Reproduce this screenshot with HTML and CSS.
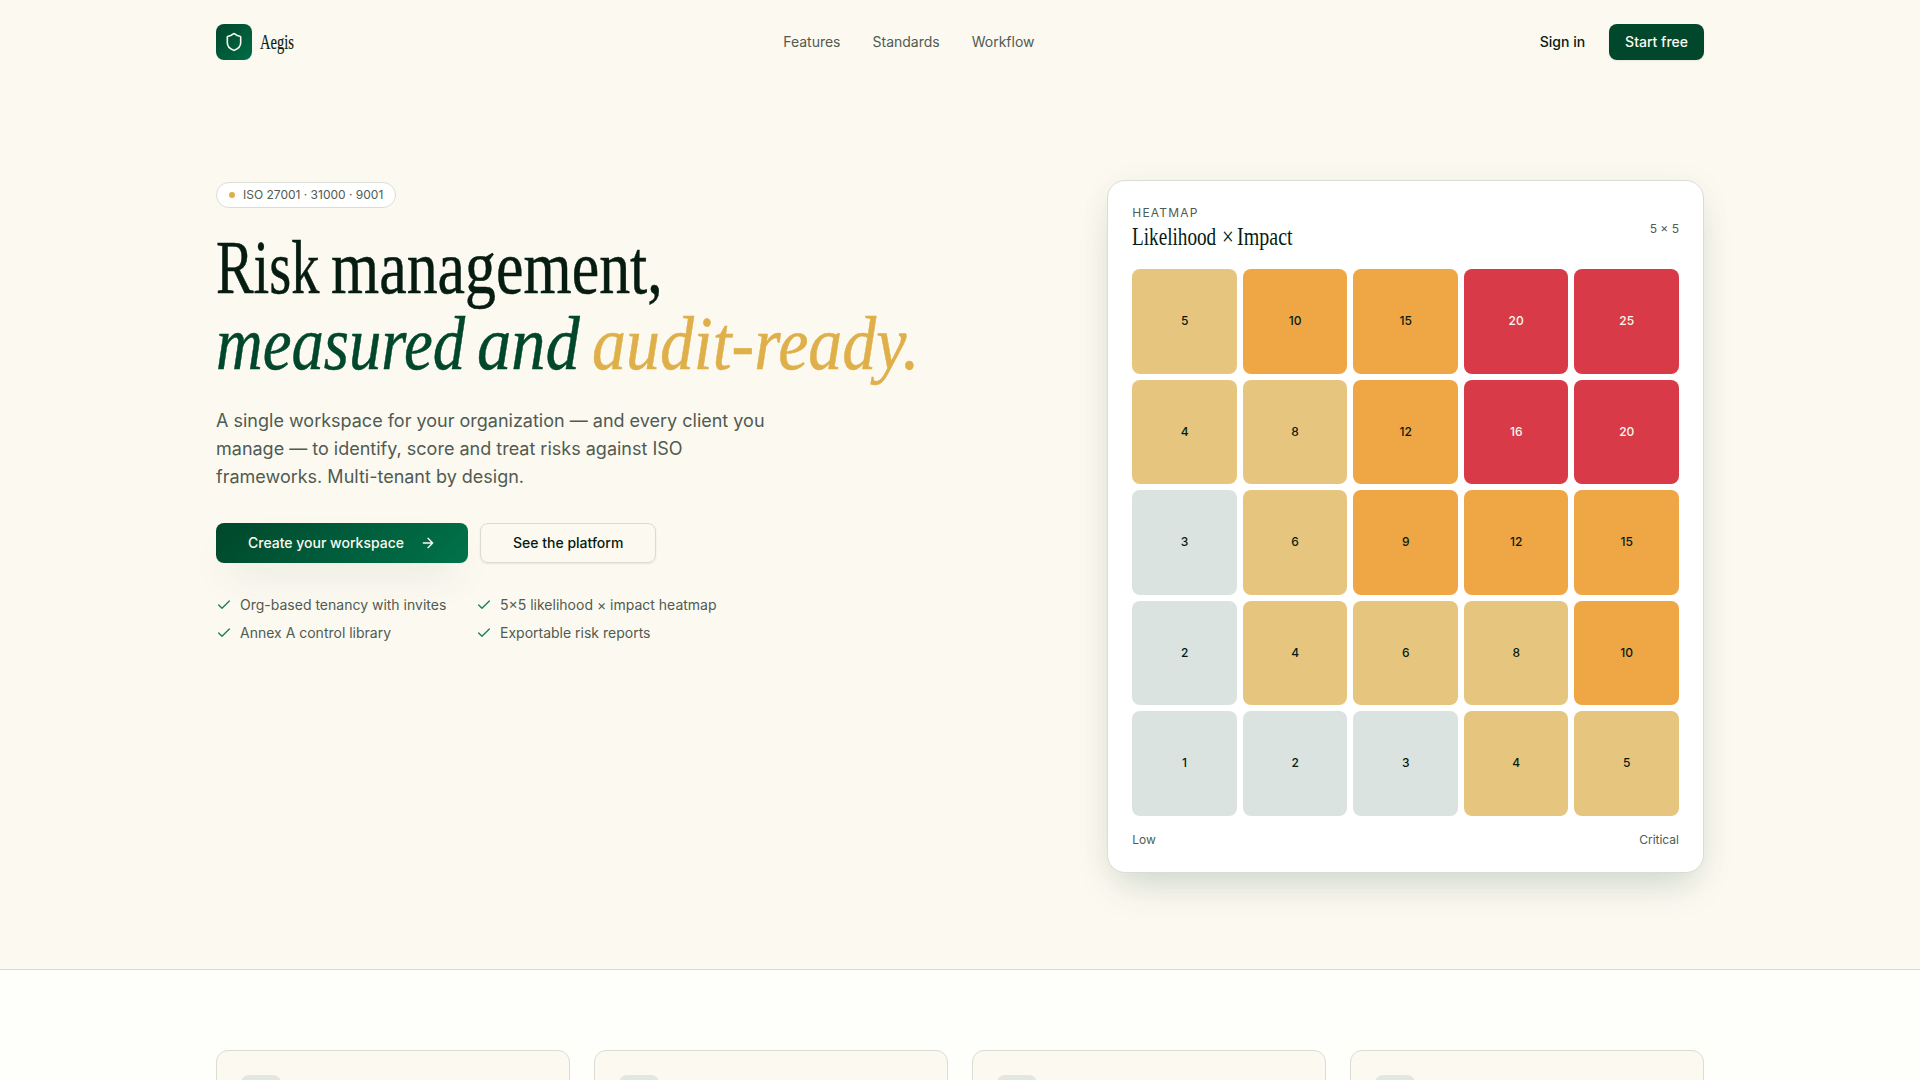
FILE: index.html
```html
<!DOCTYPE html>
<html lang="en">
<head>
<meta charset="utf-8">
<title>Aegis</title>
<link rel="stylesheet" href="styles.css">
</head>
<body>
<header class="container header">
  <div class="brand">
    <span class="brand-mark"><svg width="20" height="20" viewBox="0 0 24 24"><path d="M20 13c0 5-3.5 7.5-7.66 8.95a1 1 0 0 1-.67-.01C7.5 20.5 4 18 4 13V6a1 1 0 0 1 1-1c2 0 4.500-1.200 6.240-2.720a1.170 1.170 0 0 1 1.520 0C14.510 3.810 17 5 19 5a1 1 0 0 1 1 1z"/></svg></span>
    <span class="brand-name serif">Aegis</span>
  </div>
  <nav class="nav"><a>Features</a><a>Standards</a><a>Workflow</a></nav>
  <div class="actions"><a class="btn ghost">Sign in</a><a class="btn solid">Start free</a></div>
</header>

<main class="container hero">
  <div class="copy">
    <div class="badge"><span class="dot"></span>ISO 27001 · 31000 · 9001</div>
    <h1 class="serif">
      <span class="line"><span class="word w-risk">Risk</span> <span class="word w-management">management,</span></span>
      <em class="line"><span class="word w-measured">measured</span> <span class="word w-and">and</span> <span class="word w-ready">audit-ready.</span></em>
    </h1>
    <p class="lead">A single workspace for your organization — and every client you manage — to identify, score and treat risks against ISO frameworks. Multi-tenant by design.</p>
    <div class="cta">
      <a class="btn primary">Create your workspace<svg width="16" height="16" viewBox="0 0 24 24"><path d="M5 12h14M12 5l7 7-7 7"/></svg></a>
      <a class="btn outline">See the platform</a>
    </div>
    <ul class="checks">
      <li><svg width="16" height="16" viewBox="0 0 24 24"><path d="M20 6 9 17l-5-5"/></svg>Org-based tenancy with invites</li>
      <li><svg width="16" height="16" viewBox="0 0 24 24"><path d="M20 6 9 17l-5-5"/></svg>5×5 likelihood × impact heatmap</li>
      <li><svg width="16" height="16" viewBox="0 0 24 24"><path d="M20 6 9 17l-5-5"/></svg>Annex A control library</li>
      <li><svg width="16" height="16" viewBox="0 0 24 24"><path d="M20 6 9 17l-5-5"/></svg>Exportable risk reports</li>
    </ul>
  </div>

  <section class="card">
    <div class="card-head">
      <div>
        <div class="eyebrow">HEATMAP</div>
        <h2 class="serif"><span class="word w-likelihood">Likelihood</span> <span class="word w-times">×</span> <span class="word w-impact">Impact</span></h2>
      </div>
      <span>5 × 5</span>
    </div>
    <div class="heatmap">
      <span class="cell mid">5</span><span class="cell high">10</span><span class="cell high">15</span><span class="cell crit">20</span><span class="cell crit">25</span>
      <span class="cell mid">4</span><span class="cell mid">8</span><span class="cell high">12</span><span class="cell crit">16</span><span class="cell crit">20</span>
      <span class="cell low">3</span><span class="cell mid">6</span><span class="cell high">9</span><span class="cell high">12</span><span class="cell high">15</span>
      <span class="cell low">2</span><span class="cell mid">4</span><span class="cell mid">6</span><span class="cell mid">8</span><span class="cell high">10</span>
      <span class="cell low">1</span><span class="cell low">2</span><span class="cell low">3</span><span class="cell mid">4</span><span class="cell mid">5</span>
    </div>
    <div class="legend"><span>Low</span><span>Critical</span></div>
  </section>
</main>

<section class="features">
  <div class="container feature-grid">
    <article class="feature"><span class="feature-icon"></span></article>
    <article class="feature"><span class="feature-icon"></span></article>
    <article class="feature"><span class="feature-icon"></span></article>
    <article class="feature"><span class="feature-icon"></span></article>
  </div>
</section>
</body>
</html>
```
FILE: styles.css
```css
* { box-sizing: border-box; margin: 0; padding: 0; }
body {
  display: flex; flex-direction: column;
  height: 100vh;
  overflow: hidden;
  background: #fcf9f1;
  color: #061c11;
  font: 14px/20px Inter, sans-serif;
}
svg { fill: none; stroke: currentColor; stroke-width: 2; stroke-linecap: round; stroke-linejoin: round; flex: none; }
.serif { font-family: "Liberation Serif", serif; font-weight: 400; }
.container { width: 1536px; margin: 0 auto; padding: 0 24px; }

.header { display: flex; align-items: center; justify-content: space-between; flex: none; height: 84px; }
.brand { display: flex; align-items: center; gap: 8px; width: 78px; }
.brand-mark {
  display: grid; place-items: center; flex: none;
  width: 36px; height: 36px; border-radius: 8px;
  background: linear-gradient(135deg, #00472b, #006c47);
  color: #fcf9f1;
}
.brand-mark svg { stroke-width: 1.9; }
.brand-name {
  font-size: 21px; line-height: 28px;
  transform: scaleX(.69); transform-origin: left;
  -webkit-text-stroke: .2px;
}
.nav { display: flex; gap: 32px; color: #505b52; }
.actions { display: flex; gap: 8px; }
.btn {
  display: inline-flex; align-items: center; justify-content: center;
  height: 36px; padding: 0 16px; border-radius: 8px;
  font-weight: 500; white-space: nowrap;
}
.solid { background: #00472b; color: #fcf9f1; box-shadow: 0 1px 2px rgba(6, 28, 17, .08); }

.hero {
  display: grid; flex: none;
  grid-template-columns: 851.33px 596.67px; gap: 40px;
  padding-top: 96px; padding-bottom: 96px;
}
.copy { padding-top: 2px; }
.badge {
  display: flex; align-items: center; gap: 8px; width: fit-content;
  padding: 4px 12px; border: 1px solid #dadfd5; border-radius: 99px;
  background: #fff; color: #505b52; font-size: 12px; line-height: 16px;
}
.dot { width: 6px; height: 6px; border-radius: 50%; background: #dfb04a; }
h1 {
  margin-top: 22px; margin-bottom: 26px; font-size: 77px; line-height: 75.6px;
  white-space: nowrap; word-spacing: -8px; -webkit-text-stroke: .5px;
}
.line { display: block; height: 75.6px; }
em { color: #00472b; }
.word { display: inline-block; transform-origin: left; }
.w-risk { width: 104px; transform: scaleX(.732); }
.w-management { width: 330px; transform: scaleX(.804); }
.w-measured { width: 250px; transform: scaleX(.84); }
.w-and { width: 103px; transform: scaleX(.89); }
.w-ready { width: 325px; transform: scaleX(.882); color: #dfb04a; }
.lead { width: 576px; color: #505b52; font-size: 18px; line-height: 28px; }
.cta { display: flex; gap: 12px; margin-top: 32px; }
.cta .btn { height: 40px; padding: 0 32px; }
.primary {
  gap: 16px; background: linear-gradient(135deg, #00472b, #00734b); color: #fcf9f1;
  box-shadow: 0 20px 40px -12px rgba(0, 71, 43, .14);
}
.outline { border: 1px solid #dadcd1; box-shadow: 0 1px 2px rgba(6, 28, 17, .09); }
.checks {
  display: grid; grid-template-columns: 236px 260px; gap: 8px 24px;
  margin-top: 32px; list-style: none; color: #505b52;
}
.checks li { display: flex; align-items: center; gap: 8px; }
.checks svg { color: #1b7d59; }

.card {
  padding: 24px; border: 1px solid #d9ded4; border-radius: 18px; background: #fff;
  box-shadow: 0 20px 40px -12px rgba(0, 71, 43, .18), 0 4px 32px rgba(0, 71, 43, .05);
}
.card-head, .legend {
  display: flex; align-items: center; justify-content: space-between;
  color: #505b52; font-size: 12px; line-height: 16px;
}
.eyebrow { letter-spacing: 1.2px; }
h2 {
  height: 32px; font-size: 26px; line-height: 31px; color: #061c11;
  white-space: nowrap; word-spacing: -2.5px;
}
.w-likelihood { width: 85.5px; transform: scaleX(.738); }
.w-times { width: 11.500px; transform: scaleX(.8); }
.w-impact { width: 56px; transform: scaleX(.77); }
.heatmap { display: grid; grid-template-columns: repeat(5, 1fr); gap: 6px; margin-top: 16px; }
.cell {
  display: grid; place-items: center; aspect-ratio: 1; border-radius: 8px;
  font-size: 12px; line-height: 16px; font-weight: 500;
}
.low { background: #dae3df; }
.mid { background: #e6c67f; }
.high { background: #efa645; }
.crit { background: #d83b47; color: #fcf9f1; }
.legend { margin-top: 16px; }

.features {
  flex: 1; min-height: 0; overflow: hidden;
  padding-top: 80px; border-top: 1px solid #d8dcd1; background: #fefffa;
}
.feature-grid { display: grid; grid-template-columns: repeat(4, 1fr); gap: 24px; }
.feature { height: 220px; padding: 24px; border: 1px solid #d9ddd2; border-radius: 12px; background: #fcf9f1; }
.feature-icon { display: block; width: 40px; height: 40px; border-radius: 8px; background: #e2e8df; }
```
